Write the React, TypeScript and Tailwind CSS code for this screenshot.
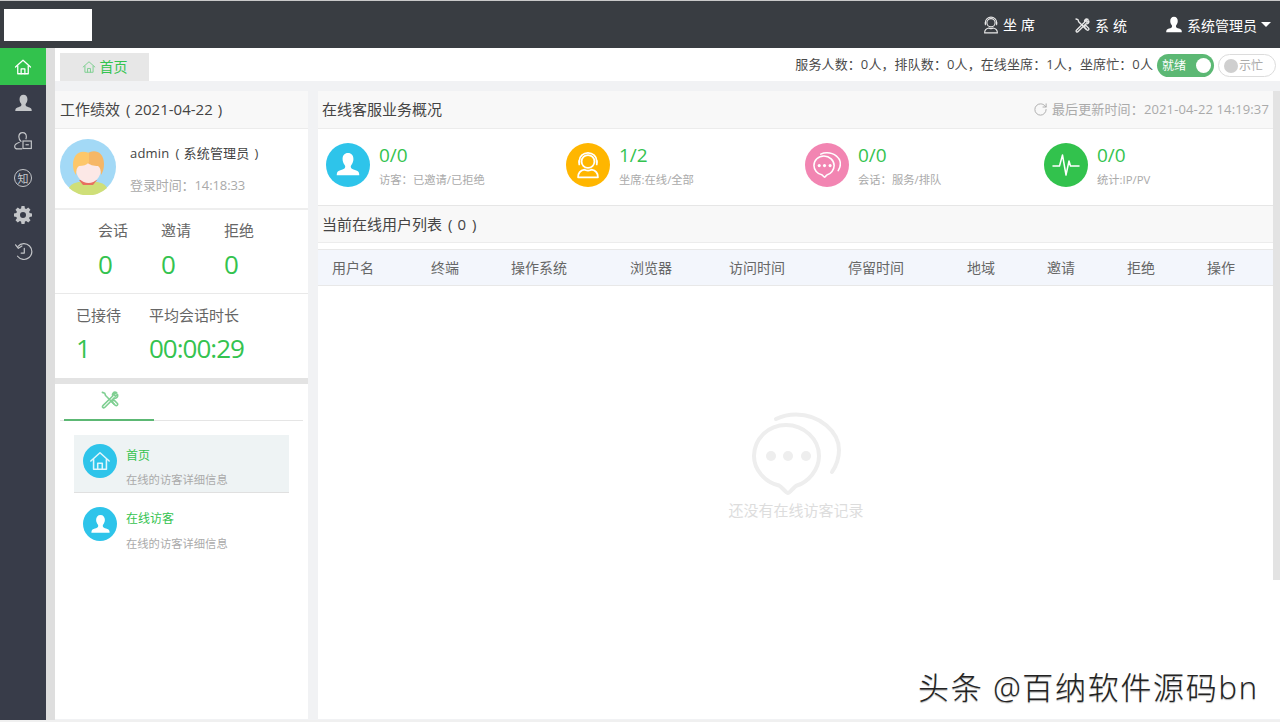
import React from 'react';
import { RotateCw } from 'lucide-react';

const GREEN = 'text-[#34c34f]';

const PersonIcon = ({ className = '' }: { className?: string }) => (
  <svg viewBox="0 0 24 24" className={className} fill="currentColor">
    <path d="M12 1c-3.200 0-5 2.400-5 5.500 0 2.200.8 4 1.900 5.400.6.800.7 1.700.3 2.600-.4 1-1.700 1.500-3.600 2.200-1.700.6-3.300 1.200-3.700 2.500-.2.700-.3 1.500-.3 2.300h20.800c0-.8-.1-1.600-.3-2.300-.4-1.300-2-1.900-3.700-2.500-1.900-.7-3.200-1.200-3.600-2.200-.4-.9-.3-1.800.3-2.600C16.200 10.500 17 8.700 17 6.500 17 3.400 15.200 1 12 1z" />
  </svg>
);

const HomeIcon = ({ className = '' }: { className?: string }) => (
  <svg viewBox="0 0 24 24" className={className} fill="none" stroke="currentColor" strokeWidth="1.700" strokeLinejoin="round" strokeLinecap="round">
    <path d="M2 12 12 3l10 9" />
    <path d="M5 10.500V21h14V10.500" />
    <path d="M9.500 21v-6.500h5V21" />
  </svg>
);

const ToolsIcon = ({ className = '' }: { className?: string }) => (
  <svg viewBox="0 0 24 24" className={className} fill="none" stroke="currentColor" strokeWidth="2" strokeLinecap="round" strokeLinejoin="round">
    <path d="M3 3l3 1 1 3 11 11" />
    <path d="M15 15l4.500 4.500a1.800 1.800 0 0 0 2.500-2.500L17.500 12.500z" />
    <path d="M21 3.500c-1.500-1-3.500-.6-4.500.7-.8 1-.9 2.300-.4 3.400L4 19.500c-1 1-1 2 -.4 2.600.7.700 1.700.6 2.600-.3L18 10c1.100.5 2.400.3 3.300-.6 1-1 1.300-2.500.7-3.800l-2.600 2.300-2-2z" />
  </svg>
);

const AgentIcon = ({ className = '' }: { className?: string }) => (
  <svg viewBox="0 0 24 24" className={className} fill="none" stroke="currentColor" strokeWidth="1.500" strokeLinecap="round" strokeLinejoin="round">
    <circle cx="12" cy="9" r="5.500" />
    <path d="M4.500 10V8.500C4.500 4.500 8 1.500 12 1.500s7.500 3 7.500 7V10" />
    <path d="M4.500 8.500v3M19.500 8.500v3" />
    <path d="M9 16c-3 .5-5.500 2-5.500 6.500h17c0-4.500-2.500-6-5.500-6.500-1 1-5 1-6 0z" />
  </svg>
);

const ChatIcon = ({ className = '', sw = 4 }: { className?: string; sw?: number }) => (
  <svg viewBox="0 0 90 84" className={className} fill="none" stroke="currentColor" strokeWidth={sw} strokeLinecap="round" strokeLinejoin="round">
    <path d="M37 81c-2 0-6-6-9-7.500C14 70 3 58 3 44 3 27 17 13 35 13s33 14 33 31c0 14-11 26-22 29.500-3 1-7 7.500-9 7.500z" />
    <path d="M25 7C31 4 38 2.500 45 2.500 69 2.500 88 20 88 38c0 9-3 16-7 22" />
    <circle cx="20" cy="44" r="5" fill="currentColor" stroke="none" />
    <circle cx="37" cy="44" r="5" fill="currentColor" stroke="none" />
    <circle cx="55" cy="44" r="5" fill="currentColor" stroke="none" />
  </svg>
);

const PulseIcon = ({ className = '' }: { className?: string }) => (
  <svg viewBox="0 0 28 28" className={className} fill="none" stroke="currentColor" strokeWidth="1.500" strokeLinejoin="round" strokeLinecap="round">
    <path d="M1 15h6.500l3-11 3.500 20 3-14 1.500 5H27" />
  </svg>
);

const Avatar = () => (
  <svg viewBox="0 0 56 56" className="w-14 h-14 shrink-0">
    <circle cx="28" cy="28" r="28" fill="#a3d9f6" />
    <path d="M9 49c2-5 10-7 19-7s17 2 19 7a28 28 0 0 1-38 0z" fill="#cfdf78" />
    <path d="M19 41h18l-4 5H23z" fill="#e8705f" />
    <ellipse cx="28.500" cy="30" rx="12.500" ry="14" fill="#fce8e6" />
    <path d="M27 15c5-5 17-4 17 10 0 4-1 8-3 11 0-5-1-8-3-9-4 0-9-1-11-4z" fill="#f6b766" />
    <path d="M29 14c-9-4-16 1-16 12 0 4 1 7 3 10 0-5 1-8 3-9 4 0 8-1 10-4z" fill="#fdc76a" />
  </svg>
);

const SideItem = ({ active, children }: { active?: boolean; children: React.ReactNode }) => (
  <div className={`h-[37px] flex items-center justify-center ${active ? 'bg-[#32c24d] text-white' : 'text-[#c4c6c9]'}`}>
    {children}
  </div>
);

const stats = [
  { color: 'bg-[#2ec4ea]', icon: <PersonIcon className="w-[26px] h-[26px] text-white" />, value: '0/0', label: '访客：已邀请/已拒绝' },
  { color: 'bg-[#ffb600]', icon: <AgentIcon className="w-7 h-7 text-white" />, value: '1/2', label: '坐席:在线/全部' },
  { color: 'bg-[#f285b2]', icon: <ChatIcon className="w-7 h-7 text-white" sw={5} />, value: '0/0', label: '会话：服务/排队' },
  { color: 'bg-[#32c24d]', icon: <PulseIcon className="w-7 h-7 text-white" />, value: '0/0', label: '统计:IP/PV' },
];

const columns = ['用户名', '终端', '操作系统', '浏览器', '访问时间', '停留时间', '地域', '邀请', '拒绝', '操作'];

export default function App() {
  return (
    <div className="relative w-[1280px] h-[725px] overflow-hidden bg-white font-['Open_Sans','Noto_Sans_CJK_SC',sans-serif] text-[#555]">
      {/* top bar */}
      <header className="h-[48px] border-t border-[#c9c9c9] bg-[#393d42] flex items-center text-white">
        <div className="ml-1 w-[88px] h-[32px] bg-white" />
        <div className="ml-auto flex items-center text-[14px] pr-[9px]">
          <AgentIcon className="w-[18px] h-[18px] text-[#e8e8e8]" />
          <span className="ml-[3px] tracking-[4px] w-[38px]">坐席</span>
          <ToolsIcon className="ml-[33px] w-[16px] h-[16px] text-[#e8e8e8]" />
          <span className="ml-[5px] tracking-[4px] w-[38px] mt-0.5">系统</span>
          <PersonIcon className="ml-[32px] w-[18px] h-[18px]" />
          <span className="ml-[4px] mt-0.5">系统管理员</span>
          <span className="ml-[4px] w-0 h-0 border-x-[5px] border-x-transparent border-t-[5px] border-t-white" />
        </div>
      </header>

      <div className="flex h-[672px]">
        {/* nav rail */}
        <aside className="w-[46px] shrink-0 bg-[#383c49]">
          <SideItem active><HomeIcon className="w-[18px] h-[18px]" /></SideItem>
          <SideItem><PersonIcon className="w-[19px] h-[19px]" /></SideItem>
          <SideItem>
            <svg viewBox="0 0 24 24" className="w-[20px] h-[20px]" fill="none" stroke="currentColor" strokeWidth="1.400">
              <path d="M10 13c-2-1.500-3-3.500-3-6 0-3 2-5 4.500-5S16 4 16 7c0 1-.2 2-.6 3" />
              <path d="M8 13.500c-3 1-6 2.500-6 5 0 2 1.500 3 3.500 3H11" />
              <rect x="12" y="12" width="10" height="9" />
              <path d="M15 16.500h4" />
            </svg>
          </SideItem>
          <SideItem>
            <span className="w-[18px] h-[18px] mt-[1px] rounded-full border border-current flex items-center justify-center text-[11px] leading-none">知</span>
          </SideItem>
          <SideItem>
            <svg viewBox="0 0 24 24" className="w-[18px] h-[18px]" fill="currentColor">
              <path fillRule="evenodd" d="M10 1h4l.6 3.200 1.700.7L19 3l3 3-1.900 2.700.7 1.700L24 11v4l-3.200.6-.7 1.700L22 20l-3 3-2.700-1.900-1.700.7L14 25h-4l-.6-3.200-1.700-.7L5 23l-3-3 1.900-2.700-.7-1.700L0 15v-4l3.200-.6.7-1.700L2 6l3-3 2.700 1.900 1.700-.7L10 1zm2 8a4 4 0 1 0 0 8 4 4 0 0 0 0-8z" transform="translate(0 -1)" />
            </svg>
          </SideItem>
          <SideItem>
            <svg viewBox="0 0 24 24" className="w-[19px] h-[19px]" fill="none" stroke="currentColor" strokeWidth="1.500" strokeLinecap="round" strokeLinejoin="round">
              <path d="M5 5.500A10 10 0 1 1 4.500 18" />
              <path d="M2 3.500 5.500 8 10 5" />
              <path d="M13 8v6H9" />
            </svg>
          </SideItem>
        </aside>

        <div className="w-[9px] shrink-0 bg-[#dedede]" />

        <main className="flex-1 min-w-0 flex flex-col bg-[#f1f2f4]">
          {/* tab strip */}
          <div className="h-[33px] shrink-0 bg-white flex items-start">
            <div className={`ml-[5px] mt-[5px] w-[89px] h-[28px] bg-[#e7e7e7] flex items-center justify-center gap-1 text-[14px] ${GREEN}`}>
              <HomeIcon className="w-[14px] h-[14px] text-[#7fcf92]" />
              <span className="mt-[-1px]">首页</span>
            </div>
            <div className="ml-auto flex items-center pr-[4px] mt-[6px] text-[13px] text-[#4a4a4a]">
              <span className="tracking-[0.1px] mt-[-2px]">服务人数：0人，排队数：0人，在线坐席：1人，坐席忙：0人</span>
              <span className="ml-1 w-[57px] h-[23px] rounded-full bg-[#5cb874] text-white flex items-center justify-between pl-[5px] pr-[3px] text-[12px]">
                就绪
                <span className="w-[15px] h-[15px] rounded-full bg-white" />
              </span>
              <span className="ml-1 w-[58px] h-[23px] rounded-full border border-[#dcdcdc] text-[#aaa] flex items-center pl-[5px] gap-[1px] text-[12px]">
                <span className="w-[14px] h-[14px] rounded-full bg-[#cfcfcf]" />
                示忙
              </span>
            </div>
          </div>

          <div className="flex-1 min-h-0 flex pt-[10px] pb-[1px]">
            {/* left column */}
            <div className="w-[253px] shrink-0 flex flex-col bg-white">
              <div className="h-[38px] shrink-0 bg-[#f8f8f8] border-b border-[#ececec] flex items-center pl-[5px] text-[15px] text-[#444] whitespace-pre">
                <span>工作绩效</span>
                <span className="ml-[6px] mr-[4px]">(</span>
                <span>2021-04-22</span>
                <span className="ml-[5px]">)</span>
              </div>
              <div className="h-[81px] shrink-0 border-b-2 border-[#eeeeee] flex items-center pl-[5px] pb-[3px]">
                <Avatar />
                <div className="ml-[14px] flex flex-col gap-[14px] mt-[3px]">
                  <div className="flex text-[13px] text-[#444] h-[18px] leading-[18px] tracking-[0.2px]">
                    <span>admin</span>
                    <span className="ml-[6px] mr-[4px]">(</span>
                    <span>系统管理员</span>
                    <span className="ml-[5px]">)</span>
                  </div>
                  <div className="text-[13px] text-[#aaa] h-[18px] leading-[18px] tracking-[-0.1px]">登录时间：14:18:33</div>
                </div>
              </div>
              <div className="h-[84px] shrink-0 border-b border-[#e9e9e9] pl-[43px] pt-[9px] flex gap-[33px]">
                {['会话', '邀请', '拒绝'].map((t) => (
                  <div key={t} className="w-[30px]">
                    <div className="text-[15px] leading-[22px] text-[#666]">{t}</div>
                    <div className={`text-[26px] leading-[34px] mt-[6px] ${GREEN}`}>0</div>
                  </div>
                ))}
              </div>
              <div className="h-[84px] shrink-0 pl-[21px] pt-[10px] flex">
                <div className="w-[73px]">
                  <div className="text-[15px] leading-[22px] text-[#666]">已接待</div>
                  <div className={`text-[26px] leading-[34px] mt-[5px] ${GREEN}`}>1</div>
                </div>
                <div>
                  <div className="text-[15px] leading-[22px] text-[#666]">平均会话时长</div>
                  <div className={`text-[26px] leading-[34px] mt-[5px] tracking-[-1px] ${GREEN}`}>00:00:29</div>
                </div>
              </div>
              <div className="h-[6px] shrink-0 bg-[#e3e3e3]" />
              <div className="flex-1 px-[5px]">
                <div className="h-[37px] border-b border-[#e5e5e5]">
                  <div className="ml-[4px] w-[90px] h-[37px] border-b-2 border-[#5cb874] flex items-center justify-center">
                    <ToolsIcon className="w-[19px] h-[19px] text-[#7fcf92] mt-[-4px]" />
                  </div>
                </div>
                <div className="mt-[14px] ml-[14px] w-[215px]">
                  <div className="h-[58px] bg-[#eef3f4] border-b border-[#e0e0e0] flex pl-[9px] pt-[9px]">
                    <span className="w-[34px] h-[34px] rounded-full bg-[#2ec4ea] text-[#dff6fc] flex items-center justify-center">
                      <HomeIcon className="w-[22px] h-[22px]" />
                    </span>
                    <div className="ml-[9px] pt-[1px]">
                      <div className={`text-[12px] leading-[22px] ${GREEN}`}>首页</div>
                      <div className="text-[11.3px] leading-[16px] mt-[5px] text-[#aaa]">在线的访客详细信息</div>
                    </div>
                  </div>
                  <div className="h-[60px] flex pl-[9px] pt-[14px]">
                    <span className="w-[34px] h-[34px] rounded-full bg-[#2ec4ea] text-white flex items-center justify-center">
                      <PersonIcon className="w-[21px] h-[21px]" />
                    </span>
                    <div className="ml-[9px] pt-[1px]">
                      <div className={`text-[12px] leading-[22px] ${GREEN}`}>在线访客</div>
                      <div className="text-[11.3px] leading-[16px] mt-[6px] text-[#aaa]">在线的访客详细信息</div>
                    </div>
                  </div>
                </div>
              </div>
            </div>

            <div className="w-[10px] shrink-0" />

            {/* right column */}
            <div className="flex-1 min-w-0 flex flex-col bg-white">
              <div className="h-[38px] shrink-0 bg-[#f8f8f8] border-b border-[#ececec] flex items-center justify-between pl-[4px] pr-[4px]">
                <span className="text-[15px] text-[#444]">在线客服业务概况</span>
                <span className="flex items-center gap-1 text-[13px] text-[#aaa] tracking-[0.13px]">
                  <RotateCw size={15} strokeWidth={1.5} />
                  最后更新时间：2021-04-22 14:19:37
                </span>
              </div>
              <div className="h-[77px] shrink-0 grid grid-cols-[240px_239px_239px_1fr] pl-[8px] pt-[14px] border-b border-[#e6e6e6]">
                {stats.map((s) => (
                  <div key={s.label} className="flex">
                    <span className={`w-[44px] h-[44px] rounded-full flex items-center justify-center ${s.color}`}>{s.icon}</span>
                    <div className="ml-[9px]">
                      <div className={`text-[19px] leading-[24px] ${GREEN}`}>{s.value}</div>
                      <div className="text-[11.3px] leading-[16px] mt-[5px] text-[#aaa]">{s.label}</div>
                    </div>
                  </div>
                ))}
              </div>
              <div className="h-[37px] shrink-0 bg-[#f8f8f8] border-b border-[#ececec] flex items-center pl-[4px] text-[15px] text-[#444]">
                <span>当前在线用户列表</span>
                <span className="ml-[6px] mr-[5px]">(</span>
                <span>0</span>
                <span className="ml-[6px]">)</span>
              </div>
              <div className="h-[6px] shrink-0" />
              <div className="h-[37px] shrink-0 bg-[#f3f6fc] border-y border-[#e8e8e8] grid grid-cols-[99px_80px_119px_99px_119px_119px_80px_80px_80px_1fr] items-center pl-[14px] text-[14px] text-[#666]">
                {columns.map((c) => (
                  <span key={c}>{c}</span>
                ))}
              </div>
              <div className="flex-1 flex flex-col items-center pt-[126px] pl-[1px]">
                <ChatIcon className="w-[90px] h-[84px] text-[#eeeeee]" />
                <div className="mt-[3px] text-[15px] text-[#dddddd]">还没有在线访客记录</div>
              </div>
            </div>

            {/* scrollbar */}
            <div className="w-[7px] shrink-0 bg-white">
              <div className="h-[489px] bg-[#e3e3e3]" />
            </div>
          </div>
        </main>
      </div>

      <div className="h-[2px] bg-[#f0f0f0]" />

      {/* watermark */}
      <div className="absolute left-[918px] top-[668px] text-[31px] leading-[38px] font-light tracking-[1.7px] text-[#222] whitespace-nowrap [text-shadow:0_1px_1px_#aaa]">头条 @百纳软件源码bn</div>
    </div>
  );
}
